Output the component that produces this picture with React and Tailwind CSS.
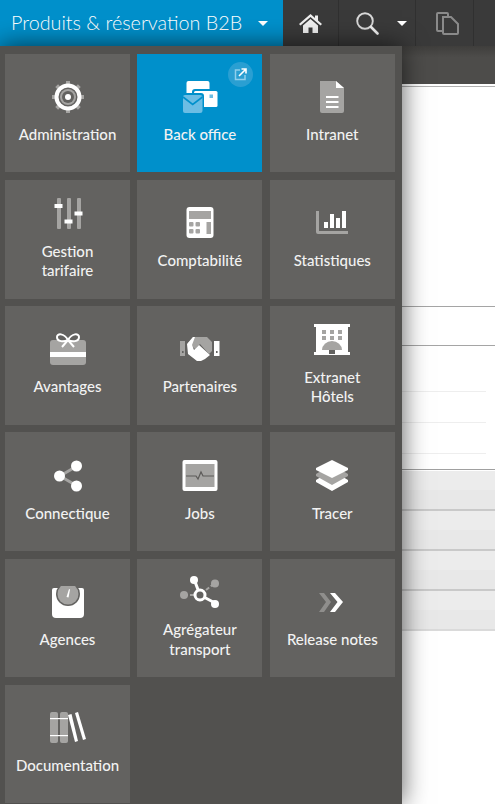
const W = '#ffffff'
const G = '#a5a4a2'
const T = '#636260'

function Gear() {
  return (
    <svg width="36" height="32" viewBox="0 0 36 32">
      {[0, 45, 90, 135, 180, 225, 270, 315].map((a) => (
        <rect key={a} x="16" y="0" width="4" height="3" fill={G} transform={`rotate(${a} 18 16)`} />
      ))}
      <circle cx="18" cy="16" r="11.5" fill="none" stroke={W} strokeWidth="4" />
      <circle cx="18" cy="16" r="8" fill={G} />
      <circle cx="18" cy="16" r="6" fill={T} />
      <circle cx="18" cy="16" r="3" fill={W} />
    </svg>
  )
}

function BackOffice() {
  return (
    <svg width="36" height="32" viewBox="0 0 36 32">
      <rect x="4.5" y="0" width="23" height="17" rx="2" fill={W} />
      <rect x="10" y="8" width="26" height="19" rx="3" fill="#0090cb" />
      <rect x="12" y="10" width="23.5" height="16" rx="1.5" fill={W} />
      <rect x="27.5" y="13.5" width="3.5" height="3.5" fill="#6bbde4" />
      <rect x="-1" y="12" width="23" height="21" rx="3" fill="#0090cb" />
      <path d="M1 16 Q1 14 3 14 H18 Q20.5 14 20.5 16 V30 Q20.5 32 18 32 H3 Q1 32 1 30 Z" fill="#6bbde4" />
      <path d="M1 16 L10.7 23.5 L20.5 16" fill="none" stroke="#0090cb" strokeWidth="1.6" />
    </svg>
  )
}

function Doc() {
  return (
    <svg width="36" height="32" viewBox="0 0 36 32">
      <path d="M6 0 H22 L30 7 V30 Q30 32 28 32 H8 Q6 32 6 30 Z" fill={G} />
      <path d="M22 0 L30 7 H22 Z" fill={W} />
      <rect x="12" y="15" width="12.5" height="2" fill={W} />
      <rect x="12" y="20" width="12.5" height="2" fill={W} />
      <rect x="12" y="25" width="12.5" height="2" fill={W} />
    </svg>
  )
}

function Sliders() {
  return (
    <svg width="36" height="32" viewBox="0 0 36 32">
      <rect x="7" y="0" width="4" height="31" rx="1" fill={G} />
      <rect x="17" y="0" width="4" height="31" rx="1" fill={G} />
      <rect x="27" y="0" width="4" height="31" rx="1" fill={G} />
      <rect x="4.5" y="6" width="8" height="4" fill={W} />
      <rect x="14.5" y="21.5" width="8" height="4" fill={W} />
      <rect x="24.5" y="13.5" width="8" height="4" fill={W} />
    </svg>
  )
}

function Calc() {
  return (
    <svg width="36" height="32" viewBox="0 0 36 32">
      <rect x="4.5" y="0" width="27" height="31" rx="3" fill={W} />
      <rect x="7" y="4" width="22" height="8" fill={G} />
      {[7, 13.5].map((x) =>
        [15, 22].map((y) => <rect key={`${x}-${y}`} x={x} y={y} width="4.5" height="4.5" rx="1" fill={G} />)
      )}
      <rect x="24.5" y="15" width="4.5" height="12" fill={G} />
    </svg>
  )
}

function Stats() {
  return (
    <svg width="36" height="32" viewBox="0 0 36 32">
      <path d="M2 4 H5 V24 H34 V27 H4 Q2 27 2 25 Z" fill={G} />
      <rect x="10" y="15" width="4" height="6" fill={W} />
      <rect x="16" y="7" width="4" height="14" fill={W} />
      <rect x="22" y="11" width="4" height="10" fill={W} />
      <rect x="28" y="4" width="4" height="17" fill={W} />
    </svg>
  )
}

function Gift() {
  return (
    <svg width="36" height="32" viewBox="0 0 36 32">
      <rect x="0" y="7" width="36" height="25" rx="3" fill={G} />
      <rect x="0" y="19" width="36" height="5" fill={W} />
      <path d="M18 7 C14 0 7 0 7 4 C7 9 14 9 18 7 C22 9 29 9 29 4 C29 0 22 0 18 7 Z" fill={T} stroke={W} strokeWidth="2" />
      <path d="M18 7 L12 14 M18 7 L24 14" fill="none" stroke={W} strokeWidth="2" />
    </svg>
  )
}

function Handshake() {
  return (
    <svg width="40" height="26" viewBox="0 0 40 26">
      <path d="M0 5 H5 V20 H0 Z" fill={G} />
      <rect x="2" y="15" width="1.6" height="2" fill={T} />
      <path d="M34 5 H39.5 V20 H34 Z" fill={W} />
      <rect x="36" y="15" width="1.6" height="2" fill={T} />
      <path d="M8 7 L13 1 H27 L32 6 V15 L29 18 L20 8 L15 13 Z" fill={G} />
      <path d="M7 8 L13 1 H15 L12 9 L14 14 L19 9 L30 19 L25 23 L21 25 H17 L8 18 Z" fill={W} />
    </svg>
  )
}

function Hotel() {
  return (
    <svg width="36" height="32" viewBox="0 0 36 32">
      <rect x="0" y="0" width="36" height="3" fill={W} />
      <rect x="2" y="2" width="32" height="28" fill={W} />
      <rect x="0" y="28" width="36" height="3" fill={W} />
      {[8, 16, 24].map((x) =>
        [6, 12].map((y) => <rect key={`${x}-${y}`} x={x} y={y} width="4" height="4" fill={G} />)
      )}
      <path d="M8 26 A10 9 0 0 1 28 26 Z" fill={G} />
      <rect x="15" y="26" width="6" height="4" fill={T} />
    </svg>
  )
}

function Share() {
  return (
    <svg width="36" height="32" viewBox="0 0 36 32">
      <path d="M10 16 L27 6 M10 16 L27 26" stroke={G} strokeWidth="3" />
      <circle cx="9.5" cy="16" r="5.5" fill={W} />
      <circle cx="26.5" cy="6" r="5.5" fill={W} />
      <circle cx="26.5" cy="26" r="5.5" fill={W} />
    </svg>
  )
}

function Jobs() {
  return (
    <svg width="36" height="32" viewBox="0 0 36 32">
      <rect x="0.5" y="0" width="35" height="31" rx="2" fill={W} />
      <rect x="3.5" y="4" width="29" height="23" fill={G} />
      <path d="M4 16 H14 L16 19 L19 12 L21 16 H32" fill="none" stroke="#5c5a58" strokeWidth="1.2" />
    </svg>
  )
}

function Layers() {
  return (
    <svg width="36" height="32" viewBox="0 0 36 32">
      <path d="M2 20 L7 17 L18 23 L29 17 L34 20 V22 L18 31 L2 22 Z" fill={W} />
      <path d="M7 11 L18 17 L29 11 L34 14 V16 L18 25 L2 16 V14 Z" fill={G} />
      <path d="M18 0 L34 8 V10 L18 18 L2 10 V8 Z" fill={W} />
    </svg>
  )
}

function Scale() {
  return (
    <svg width="36" height="32" viewBox="0 0 36 32">
      <path d="M2 4 Q2 2 4 2 H32 Q34 2 34 4 V28 Q34 32 30 32 H6 Q2 32 2 28 Z" fill={W} />
      <circle cx="18" cy="8" r="12" fill={T} />
      <circle cx="18" cy="8" r="10.5" fill={G} />
      <path d="M19 3 L20 3.5 L18.5 11.5 L16.5 11 Z" fill={W} />
      <rect x="0" y="-5" width="36" height="5" fill={T} />
    </svg>
  )
}

function Aggregator() {
  return (
    <svg width="40" height="32" viewBox="0 0 40 32">
      <path d="M4 19 H14 M26 14 L35 7" stroke={G} strokeWidth="2" strokeDasharray="4 2" />
      <circle cx="4" cy="19" r="4" fill={G} />
      <circle cx="35" cy="7.5" r="4" fill={G} />
      <path d="M14 3 L20 19 L35 27" fill="none" stroke={W} strokeWidth="3" />
      <circle cx="14" cy="4" r="4" fill={W} />
      <circle cx="35" cy="28" r="4" fill={W} />
      <circle cx="20" cy="19" r="5" fill={T} stroke={W} strokeWidth="3" />
    </svg>
  )
}

function Chevrons() {
  return (
    <svg width="36" height="32" viewBox="0 0 36 32">
      <path d="M5 7 H10 L17 16 L10 26 H5 L12 16 Z" fill="#8f8e8c" />
      <path d="M16 7 H21 L29 16 L21 26 H16 L23.5 16 Z" fill={W} />
    </svg>
  )
}

function Books() {
  return (
    <svg width="36" height="32" viewBox="0 0 36 32">
      <rect x="0" y="0" width="8" height="31" rx="2" fill={G} />
      <rect x="10" y="0" width="8" height="31" rx="2" fill={G} />
      <rect x="0" y="6" width="18" height="1.2" fill={W} />
      <rect x="0" y="23" width="18" height="1.2" fill={W} />
      <path d="M18 3 L21.5 2 L28 29 L25 30 Z" fill={W} />
      <path d="M25 1 L28 0 L36 27 L33 28 Z" fill={W} />
    </svg>
  )
}

const tiles = [
  { label: 'Administration', Icon: Gear },
  { label: 'Back office', Icon: BackOffice, active: true },
  { label: 'Intranet', Icon: Doc },
  { label: 'Gestion tarifaire', Icon: Sliders, two: true },
  { label: 'Comptabilité', Icon: Calc },
  { label: 'Statistiques', Icon: Stats },
  { label: 'Avantages', Icon: Gift },
  { label: 'Partenaires', Icon: Handshake },
  { label: 'Extranet Hôtels', Icon: Hotel, two: true },
  { label: 'Connectique', Icon: Share },
  { label: 'Jobs', Icon: Jobs },
  { label: 'Tracer', Icon: Layers },
  { label: 'Agences', Icon: Scale },
  { label: 'Agrégateur transport', Icon: Aggregator, two: true },
  { label: 'Release notes', Icon: Chevrons },
  { label: 'Documentation', Icon: Books },
]

function Tile({ label, Icon, active, two }) {
  return (
    <div
      className={`relative flex h-[118.4px] flex-col items-center justify-center px-1 text-center ${
        active ? 'bg-[#0090cb]' : 'bg-[#636260]'
      } ${two ? '' : 'pb-px'}`}
    >
      {active && (
        <div className="absolute right-[9px] top-[8px] flex h-[25px] w-[25px] items-center justify-center rounded-full bg-[#2a9fd2]">
          <svg width="13" height="13" viewBox="0 0 13 13" fill="none">
            <path d="M6 2 H1.5 V11.5 H11 V7" stroke="#8fcfec" strokeWidth="1.5" />
            <path d="M5 8 L11.5 1.5 M7.5 1 H12 V5.5" stroke="#ffffff" strokeWidth="1.6" />
          </svg>
        </div>
      )}
      <div className="flex h-8 items-center justify-center">
        <Icon />
      </div>
      <div className={`${two ? 'mt-[12px] w-[90px] leading-[19.5px]' : 'mt-[11px] leading-5'} text-[15px] font-medium text-[#f2f2f2]`}>
        {label}
      </div>
    </div>
  )
}

function Caret() {
  return <div className="h-0 w-0 border-x-[5px] border-t-[5px] border-x-transparent border-t-white" />
}

export default function App() {
  return (
    <div className="relative h-[804px] w-[495px] overflow-hidden bg-white font-['Lato',sans-serif]">
      <header className="flex h-[46px] bg-[#3a3a3a]">
        <div className="flex w-[283px] items-center bg-[#0090cb] pl-[11px] text-[19.75px] font-light text-white">
          <span className="w-[247px] whitespace-nowrap">Produits &amp; réservation B2B</span>
          <Caret />
        </div>
        <div className="flex w-[56px] items-center justify-center border-r border-[#303030]">
          <svg width="23" height="19" viewBox="0 0 23 19" fill="#f0f0f0">
            <path d="M11.5 0 L16 4 V1.5 H19 V6.5 L23 10 L21.5 11.5 L11.5 3 L1.5 11.5 L0 10 Z" />
            <path d="M4 11.5 L11.5 5 L19 11.5 V19 H13.5 V13.5 H9.5 V19 H4 Z" />
          </svg>
        </div>
        <div className="flex w-[77px] items-center gap-[18px] border-r border-[#303030] pl-[17px]">
          <svg width="23" height="23" viewBox="0 0 23 23" fill="none">
            <circle cx="9" cy="9" r="7.8" stroke="#d8d8d8" strokeWidth="1.9" />
            <path d="M15 15 L21.5 21.5" stroke="#f0f0f0" strokeWidth="2.6" strokeLinecap="round" />
          </svg>
          <Caret />
        </div>
        <div className="flex w-[58px] items-center justify-center border-r border-[#303030] pl-[6px]">
          <svg width="23" height="23" viewBox="0 0 23 23" fill="none" stroke="#8a8a8a" strokeWidth="2">
            <path d="M7 19 H2 Q1 19 1 18 V2 Q1 1 2 1 H11 Q12 1 12 2 V4" />
            <path d="M7 5 H15 L22 12 V21 Q22 22 21 22 H8 Q7 22 7 21 Z" />
          </svg>
        </div>
      </header>

      <div className="h-[38px] bg-[linear-gradient(#3f3e3c,#4d4c4a_30%)]" />
      <div className="h-[2px] bg-white" />
      <div className="h-px bg-[#b0b0b0]" />
      <div className="h-[219px]" />
      <div className="h-[39px] border-t border-[#a5a5a5]" />
      <div className="border-t border-[#a5a5a5]">
        <div className="mr-[9px] h-[46px] border-b border-[#eeeeee]" />
        <div className="mr-[9px] h-[31px] border-b border-[#eeeeee]" />
        <div className="mr-[9px] h-[31px] border-b border-[#eeeeee]" />
      </div>
      <div className="mt-[15px] border-t border-[#a0a0a0] pt-px">
        {[0, 1, 2, 3].map((i) => (
          <div key={i} className="h-[40px] border-b-2 border-[#c9c9c9] bg-[linear-gradient(#ececec_50%,#e8e8e8_50%)] last:border-[#dadada]" />
        ))}
      </div>

      <div className="absolute left-0 top-[46px] h-[758px] w-[402px] bg-[#52514f] pl-[5px] pt-[8px] shadow-[0_0_24px_rgba(0,0,0,0.65)]">
        <div className="grid grid-cols-[repeat(3,125px)] gap-x-[7.4px] gap-y-[7.75px]">
          {tiles.map((t) => (
            <Tile key={t.label} {...t} />
          ))}
        </div>
      </div>
    </div>
  )
}
